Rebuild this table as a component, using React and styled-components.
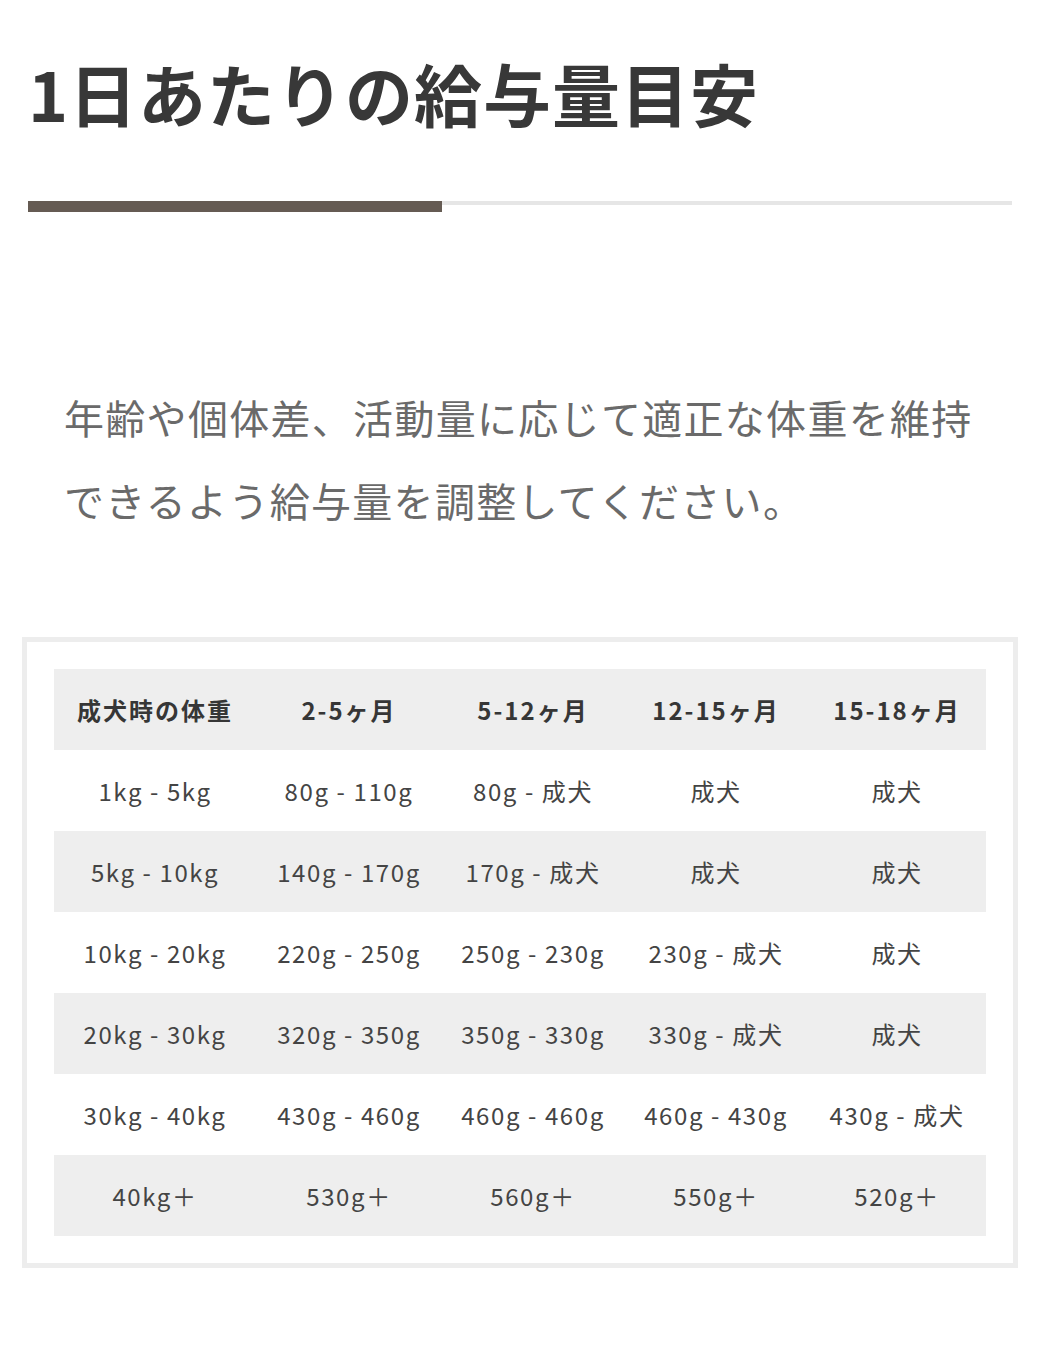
import React from "react";
import styled, { createGlobalStyle } from "styled-components";

const GlobalStyle = createGlobalStyle`
  html, body {
    margin: 0;
    padding: 0;
    background: #ffffff;
  }
  body {
    font-family: "Noto Sans CJK JP", "Noto Sans", sans-serif;
    color: #333333;
  }
`;

const Page = styled.div`
  width: 1040px;
  min-height: 1371px;
  box-sizing: border-box;
  padding: 0 22px 100px;
`;

const Header = styled.header`
  padding: 0 6px;
`;

const Title = styled.h1`
  margin: 45px 0 0;
  font-size: 68px;
  line-height: 96px;
  font-weight: 700;
  color: #383838;
  letter-spacing: 1px;
`;

const Divider = styled.div`
  display: flex;
  align-items: flex-start;
  margin-top: 60px;
`;

const DividerAccent = styled.div`
  width: 414px;
  height: 11px;
  background: #655b53;
`;

const DividerRest = styled.div`
  flex: 1;
  height: 4px;
  background: #e6e6e6;
`;

const Lead = styled.p`
  margin: 164px 0 0;
  padding: 0 20px 0 42px;
  font-size: 40px;
  line-height: 83px;
  letter-spacing: 1.3px;
  color: #6a6a6a;
  font-weight: 400;
`;

const TableBox = styled.div`
  margin-top: 95px;
  border: 5px solid #ededed;
  padding: 27px;
`;

const Table = styled.table`
  width: 100%;
  border-collapse: collapse;
  table-layout: fixed;
`;

const Row = styled.tr`
  height: 81px;
  background: ${(p) => (p.$shaded ? "#eeeeee" : "#ffffff")};
`;

const HeadCell = styled.th`
  padding: 0;
  font-size: 24px;
  font-weight: 700;
  letter-spacing: 2px;
  color: #363636;
  text-align: center;
  vertical-align: middle;
  white-space: nowrap;
`;

const Cell = styled.td`
  padding: 0;
  font-size: 24px;
  font-weight: 400;
  letter-spacing: 1.6px;
  color: #444444;
  text-align: center;
  vertical-align: middle;
  white-space: nowrap;
`;

const columns = [202, 186, 182, 184, 178];
const headers = ["成犬時の体重", "2-5ヶ月", "5-12ヶ月", "12-15ヶ月", "15-18ヶ月"];
const rows = [
  ["1kg - 5kg", "80g - 110g", "80g - 成犬", "成犬", "成犬"],
  ["5kg - 10kg", "140g - 170g", "170g - 成犬", "成犬", "成犬"],
  ["10kg - 20kg", "220g - 250g", "250g - 230g", "230g - 成犬", "成犬"],
  ["20kg - 30kg", "320g - 350g", "350g - 330g", "330g - 成犬", "成犬"],
  ["30kg - 40kg", "430g - 460g", "460g - 460g", "460g - 430g", "430g - 成犬"],
  ["40kg＋", "530g＋", "560g＋", "550g＋", "520g＋"],
];

export default function App() {
  return (
    <>
      <GlobalStyle />
      <Page>
        <Header>
          <Title>1日あたりの給与量目安</Title>
          <Divider>
            <DividerAccent />
            <DividerRest />
          </Divider>
        </Header>
        <Lead>
          年齢や個体差、活動量に応じて適正な体重を維持できるよう給与量を調整してください。
        </Lead>
        <TableBox>
          <Table>
            <colgroup>
              {columns.map((w, i) => (
                <col key={i} style={{ width: w }} />
              ))}
            </colgroup>
            <thead>
              <Row $shaded>
                {headers.map((h) => (
                  <HeadCell key={h}>{h}</HeadCell>
                ))}
              </Row>
            </thead>
            <tbody>
              {rows.map((r, i) => (
                <Row key={i} $shaded={i % 2 === 1}>
                  {r.map((c, j) => (
                    <Cell key={j}>{c}</Cell>
                  ))}
                </Row>
              ))}
            </tbody>
          </Table>
        </TableBox>
      </Page>
    </>
  );
}
